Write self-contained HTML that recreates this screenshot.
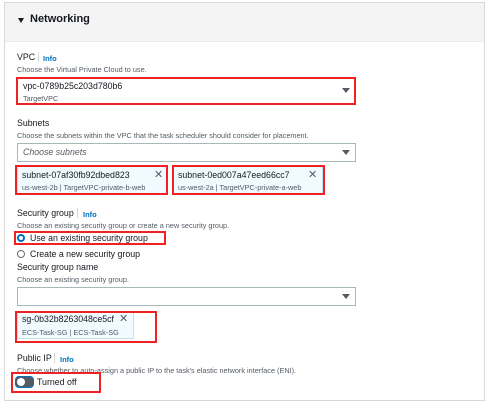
<!DOCTYPE html>
<html><head><style>
*{margin:0;padding:0;box-sizing:border-box}
body{width:487px;height:404px;background:#fff;font-family:"Liberation Sans",sans-serif;color:#16191f;position:relative;overflow:hidden}
.a{position:absolute;white-space:nowrap}
.panel{left:4px;top:2px;width:481px;height:399px;border:1px solid #d5dbdb;background:#fff}
.hdr{left:5px;top:3px;width:479px;height:39px;background:#f4f4f4;border-bottom:1px solid #eaeded}
.lbl{font-size:8.8px;color:#16191f}
.info{font-size:7.5px;color:#0073bb;font-weight:bold}
.sep{width:1px;height:10px;background:#d5dbdb}
.desc{font-size:7.3px;color:#545b64}
.red{border:2px solid #e22;}
.box{border:1px solid #aab7b8;background:#fff}
.tok{background:#f1faff;border:1px solid #c5dfef}
.t1{font-size:8.8px;color:#16191f}
.t2{font-size:7.3px;color:#545b64}
.arr{width:0;height:0;border-left:4px solid transparent;border-right:4px solid transparent;border-top:5px solid #545b64}
.x{font-size:11px;color:#545b64;line-height:1}
</style></head><body>
<div class="a panel"></div>
<div class="a hdr"></div>
<div class="a" style="left:18px;top:18px;width:0;height:0;border-left:3.5px solid transparent;border-right:3.5px solid transparent;border-top:5px solid #16191f"></div>
<div class="a" style="left:30px;top:13px;font-size:11px;font-weight:bold">Networking</div>

<div class="a lbl" style="left:17px;top:52px">VPC</div>
<div class="a sep" style="left:38px;top:52px"></div>
<div class="a info" style="left:43px;top:54px">Info</div>
<div class="a desc" style="left:17px;top:65px">Choose the Virtual Private Cloud to use.</div>
<div class="a red" style="left:16px;top:77px;width:340px;height:28px"></div>
<div class="a t1" style="left:23px;top:81px">vpc-0789b25c203d780b6</div>
<div class="a t2" style="left:23px;top:94px">TargetVPC</div>
<div class="a arr" style="left:342px;top:88px"></div>

<div class="a lbl" style="left:17px;top:118px">Subnets</div>
<div class="a desc" style="left:17px;top:131px">Choose the subnets within the VPC that the task scheduler should consider for placement.</div>
<div class="a box" style="left:17px;top:143px;width:339px;height:19px"></div>
<div class="a" style="left:23px;top:147px;font-size:8.8px;font-style:italic;color:#545b64">Choose subnets</div>
<div class="a arr" style="left:342px;top:150px"></div>

<div class="a tok" style="left:17px;top:166px;width:150px;height:28px"></div>
<div class="a red" style="left:15px;top:165px;width:153px;height:30px"></div>
<div class="a t1" style="left:22px;top:170px">subnet-07af30fb92dbed823</div>
<div class="a t2" style="left:22px;top:183px">us-west-2b | TargetVPC-private-b-web</div>
<div class="a x" style="left:154px;top:170px">✕</div>
<div class="a tok" style="left:173px;top:166px;width:150px;height:28px"></div>
<div class="a red" style="left:172px;top:165px;width:153px;height:30px"></div>
<div class="a t1" style="left:178px;top:170px">subnet-0ed007a47eed66cc7</div>
<div class="a t2" style="left:178px;top:183px">us-west-2a | TargetVPC-private-a-web</div>
<div class="a x" style="left:308px;top:170px">✕</div>

<div class="a lbl" style="left:17px;top:208px">Security group</div>
<div class="a sep" style="left:77px;top:208px"></div>
<div class="a info" style="left:83px;top:210px">Info</div>
<div class="a desc" style="left:17px;top:221px">Choose an existing security group or create a new security group.</div>
<div class="a red" style="left:14px;top:231px;width:152px;height:14px"></div>
<div class="a" style="left:17px;top:234px;width:8px;height:8px;border-radius:50%;border:2.5px solid #0073bb;background:#fff"></div>
<div class="a t1" style="left:30px;top:233px">Use an existing security group</div>
<div class="a" style="left:17px;top:250px;width:8px;height:8px;border-radius:50%;border:1px solid #687078"></div>
<div class="a t1" style="left:30px;top:249px">Create a new security group</div>
<div class="a lbl" style="left:17px;top:262px">Security group name</div>
<div class="a desc" style="left:17px;top:275px">Choose an existing security group.</div>
<div class="a box" style="left:17px;top:287px;width:339px;height:19px"></div>
<div class="a arr" style="left:342px;top:294px"></div>
<div class="a tok" style="left:17px;top:312px;width:117px;height:27px"></div>
<div class="a red" style="left:15px;top:311px;width:142px;height:32px"></div>
<div class="a t1" style="left:22px;top:314px">sg-0b32b8263048ce5cf</div>
<div class="a t2" style="left:22px;top:328px">ECS-Task-SG | ECS-Task-SG</div>
<div class="a x" style="left:119px;top:314px">✕</div>

<div class="a lbl" style="left:17px;top:353px">Public IP</div>
<div class="a sep" style="left:54px;top:353px"></div>
<div class="a info" style="left:60px;top:355px">Info</div>
<div class="a desc" style="left:17px;top:366px">Choose whether to auto-assign a public IP to the task's elastic network interface (ENI).</div>
<div class="a red" style="left:11px;top:372px;width:90px;height:21px"></div>
<div class="a" style="left:15px;top:376px;width:19px;height:12px;border-radius:4px;border:1.5px solid #0073bb;background:#545b64"></div>
<div class="a" style="left:17px;top:378px;width:8px;height:8px;border-radius:50%;background:#fff"></div>
<div class="a t1" style="left:37px;top:377px">Turned off</div>
</body></html>
